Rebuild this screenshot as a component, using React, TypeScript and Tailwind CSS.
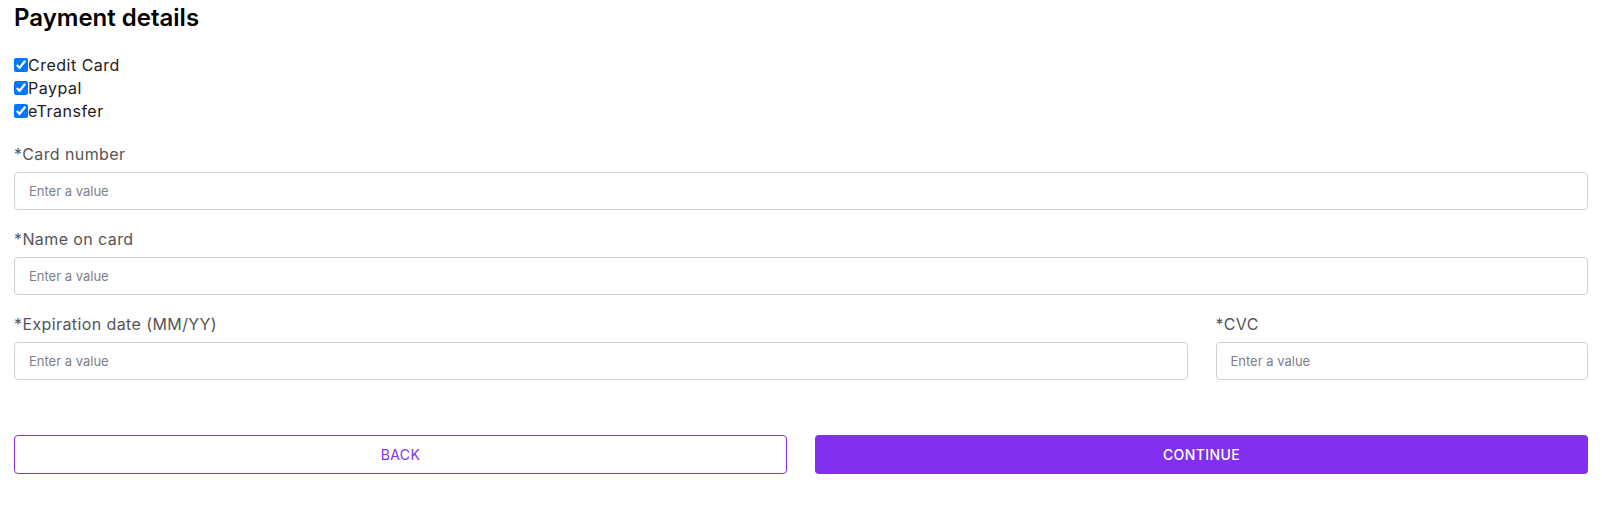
const Field = ({ label }: { label: string }) => (
  <div className="flex flex-col">
    <label className="text-[16px] leading-[24px] tracking-[0.4px] text-[#555555]">{label}</label>
    <input
      type="text"
      placeholder="Enter a value"
      className="mt-[6px] h-[38px] w-full rounded-[4px] border border-[#d0d0d6] px-[14px] text-[13px] text-[#333] placeholder:text-[#80808a] outline-none"
    />
  </div>
);

export default function App() {
  const methods = ["Credit Card", "Paypal", "eTransfer"];
  return (
    <div
      className="min-h-screen bg-white px-[14px] text-[#222]"
      style={{ fontFamily: "Inter, 'Open Sans', sans-serif" }}
    >
      <h2 className="text-[24px] leading-[36px] font-semibold text-black">Payment details</h2>

      <div className="mt-[17px] flex flex-col">
        {methods.map((m) => (
          <label key={m} className="flex h-[23px] items-center text-[16px] tracking-[0.5px] text-[#222]">
            <input type="checkbox" defaultChecked className="m-0 h-[14px] w-[14px] accent-[#0075ff]" />
            {m}
          </label>
        ))}
      </div>

      <div className="mt-[20px] flex flex-col gap-[17px]">
        <Field label="*Card number" />
        <Field label="*Name on card" />
        <div className="grid grid-cols-4 gap-[28px]">
          <div className="col-span-3">
            <Field label="*Expiration date (MM/YY)" />
          </div>
          <Field label="*CVC" />
        </div>
      </div>

      <div className="mt-[55px] grid grid-cols-2 gap-[28px]">
        <button className="h-[39px] rounded-[4px] border border-[#8130ef] bg-white text-[14px] uppercase tracking-[0.4px] text-[#8130ef]">
          Back
        </button>
        <button className="h-[39px] rounded-[4px] bg-[#8130ef] text-[14px] font-medium uppercase tracking-[0.4px] text-white">
          Continue
        </button>
      </div>
    </div>
  );
}
